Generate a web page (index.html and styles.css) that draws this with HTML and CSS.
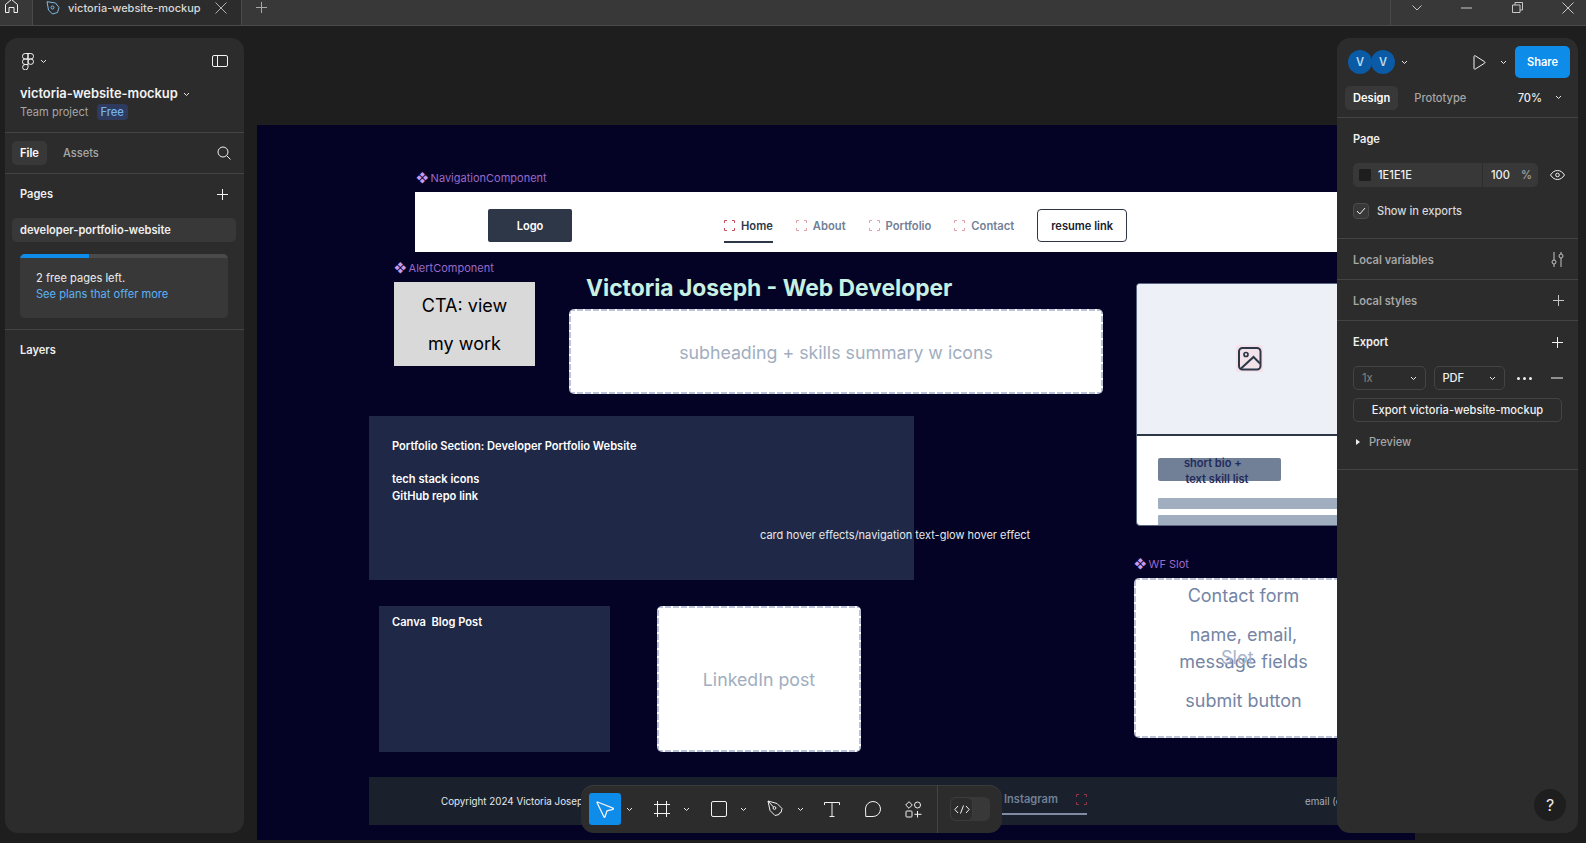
FILE: index.html
```html
<!DOCTYPE html>
<html lang="en">
<head>
<meta charset="utf-8">
<title>victoria-website-mockup</title>
<link rel="stylesheet" href="styles.css">
</head>
<body>
<header class="tabbar">
  <div class="tab-home">
    <svg class="ico" width="13" height="14" viewBox="0 0 13 14"><path d="M.5 13.500V5.500L6.500.5l6 5v8H9V8.500H4v5z"/></svg>
  </div>
  <div class="tab-active">
    <svg class="ico-blue" width="14" height="14" viewBox="0 0 14 14"><path d="M1 .7l8.500 1.300 3.500 4.500-1.500 5-5 1.500-4-4z"/><circle cx="6.500" cy="6.500" r="1.500"/></svg>
    <span class="tab-title">victoria-website-mockup</span>
    <svg class="ico tab-x" width="12" height="12" viewBox="0 0 12 12"><path d="M.5.5l11 11M11.500.5l-11 11"/></svg>
  </div>
  <div class="tab-plus">
    <svg class="ico" width="11" height="11" viewBox="0 0 11 11"><path d="M5.500 0v11M0 5.500h11"/></svg>
  </div>
  <div class="tab-spacer"></div>
  <div class="win-controls">
    <svg class="ico" width="10" height="6" viewBox="0 0 10 6"><path d="M.5.500L5 5l4.500-4.500"/></svg>
    <svg class="ico" width="11" height="2" viewBox="0 0 11 2"><path d="M0 1h11"/></svg>
    <svg class="ico" width="11" height="11" viewBox="0 0 11 11"><path d="M.5 3h7.500v7.500H.5zM3 3V.5h7.500V8H8"/></svg>
    <svg class="ico" width="12" height="12" viewBox="0 0 12 12"><path d="M.5.5l11 11M11.500.5l-11 11"/></svg>
  </div>
</header>

<main class="workspace">
  <div class="board">
    <div class="label label-nav"><span class="diamond">❖</span>NavigationComponent</div>
    <nav class="site-nav">
      <div class="logo">Logo</div>
      <div class="nav-links">
        <a class="nav-tab nav-current"><svg class="ph" width="11" height="11" viewBox="0 0 11 11"><path d="M.5 3V.5H3M8 .5h2.500V3M10.500 8v2.500H8M3 10.500H.5V8"/></svg>Home</a>
        <a class="nav-tab"><svg class="ph" width="11" height="11" viewBox="0 0 11 11"><path d="M.5 3V.5H3M8 .5h2.500V3M10.500 8v2.500H8M3 10.500H.5V8"/></svg>About</a>
        <a class="nav-tab"><svg class="ph" width="11" height="11" viewBox="0 0 11 11"><path d="M.5 3V.5H3M8 .5h2.500V3M10.500 8v2.500H8M3 10.500H.5V8"/></svg>Portfolio</a>
        <a class="nav-tab"><svg class="ph" width="11" height="11" viewBox="0 0 11 11"><path d="M.5 3V.5H3M8 .5h2.500V3M10.500 8v2.500H8M3 10.500H.5V8"/></svg>Contact</a>
        <div class="resume">resume link</div>
      </div>
    </nav>

    <div class="label label-alert"><span class="diamond">❖</span>AlertComponent</div>
    <div class="cta">CTA: view<br>my work</div>
    <h1 class="hero-title">Victoria Joseph - Web Developer</h1>
    <div class="slot slot-sub">subheading + skills summary w icons</div>

    <section class="dark-block portfolio">
      <p>Portfolio Section: Developer Portfolio Website</p>
      <p class="gap-line">tech stack icons</p>
      <p>GitHub repo link</p>
    </section>
    <div class="hover-note">card hover effects/navigation text-glow hover effect</div>

    <section class="dark-block canva"><p>Canva&nbsp; Blog Post</p></section>
    <div class="slot slot-linkedin">LinkedIn post</div>

    <article class="bio-card">
      <div class="bio-media">
        <svg class="bio-icon" width="27" height="27" viewBox="0 0 27 27"><rect x="0" y="0" width="27" height="27" fill="#f6d5dc" opacity=".5"/><rect x="3" y="3" width="21.500" height="21.500" rx="3.500" fill="none" stroke="#2d3748" stroke-width="2"/><circle cx="10" cy="9.500" r="2" fill="none" stroke="#2d3748" stroke-width="1.700"/><path d="M5 23.500L17.500 12l6.500 6.500" fill="none" stroke="#2d3748" stroke-width="2"/></svg>
      </div>
      <div class="bio-body">
        <div class="bio-title"><span class="bio-title-text">short bio +&#160;&#160;&#160;
text skill list</span></div>
        <div class="bio-line"></div>
        <div class="bio-line"></div>
      </div>
    </article>

    <div class="label label-slot"><span class="diamond">❖</span>WF Slot</div>
    <div class="contact">
      <p>Contact form</p>
      <p>name, email,<br>message fields</p>
      <p>submit button</p>
      <span class="contact-slot">Slot</span>
    </div>

    <footer class="site-footer">
      <span class="copy">Copyright 2024 Victoria Joseph</span>
      <span class="insta-tab">Instagram<svg class="ph" width="11" height="11" viewBox="0 0 11 11"><path d="M.5 3V.5H3M8 .5h2.500V3M10.500 8v2.500H8M3 10.500H.5V8"/></svg></span>
      <span class="foot-email">email (contact)</span>
    </footer>
  </div>

  <aside class="panel panel-left">
    <div class="pl-head">
      <div class="pl-iconrow">
        <span class="logo-wrap">
          <svg class="ico" width="12" height="17" viewBox="0 0 12 17"><path d="M6 .5H3.200a2.700 2.700 0 000 5.500H6zM6 .5h2.800a2.700 2.700 0 010 5.500H6zM6 6H3.200a2.700 2.700 0 000 5.500H6zM11.500 8.700a2.700 2.700 0 11-5.500 0 2.700 2.700 0 015.500 0zM6 11.500H3.200A2.700 2.700 0 106 14.200z"/></svg>
          <svg class="chev" width="7" height="5" viewBox="0 0 7 5"><path d="M1 1l2.500 2.500L6 1"/></svg>
        </span>
        <svg class="ico" width="16" height="12" viewBox="0 0 16 12"><rect x=".5" y=".5" width="15" height="11" rx="1.500"/><path d="M5.500 .5v11"/></svg>
      </div>
      <div class="pl-title">victoria-website-mockup <svg class="chev" width="7" height="5" viewBox="0 0 7 5"><path d="M1 1l2.500 2.500L6 1"/></svg></div>
      <div class="pl-sub">Team project <span class="badge">Free</span></div>
    </div>
    <div class="pl-tabs">
      <span class="pill">File</span>
      <span class="pl-assets">Assets</span>
      <svg class="ico pl-search" width="14" height="14" viewBox="0 0 14 14"><circle cx="6" cy="6" r="5"/><path d="M9.700 9.700l3.800 3.800"/></svg>
    </div>
    <div class="pl-pages">
      <div class="row-head"><b>Pages</b><svg class="ico" width="11" height="11" viewBox="0 0 11 11"><path d="M5.500 0v11M0 5.500h11"/></svg></div>
      <div class="page-item">developer-portfolio-website</div>
      <div class="notice">
        <div class="progress"><div class="progress-fill"></div></div>
        <p>2 free pages left.</p>
        <p class="link">See plans that offer more</p>
      </div>
    </div>
    <div class="pl-layers"><b>Layers</b></div>
  </aside>

  <aside class="panel panel-right">
    <div class="pr-top">
      <span class="avatar">V</span><span class="avatar avatar-2">V</span>
      <svg class="chev chev-av" width="7" height="5" viewBox="0 0 7 5"><path d="M1 1l2.500 2.500L6 1"/></svg>
      <svg class="ico pr-play" width="13" height="15" viewBox="0 0 13 15"><path d="M1 1.500c0-.8.6-1 1.200-.7l9.500 6c.5.300.5 1 0 1.300l-9.500 6c-.6.400-1.200 0-1.200-.7z"/></svg>
      <svg class="chev chev-play" width="7" height="5" viewBox="0 0 7 5"><path d="M1 1l2.500 2.500L6 1"/></svg>
      <span class="share">Share</span>
    </div>
    <div class="pr-tabs">
      <span class="pill pill-design">Design</span>
      <span class="pr-proto">Prototype</span>
      <span class="pr-zoom">70%</span>
      <svg class="chev" width="7" height="5" viewBox="0 0 7 5"><path d="M1 1l2.500 2.500L6 1"/></svg>
    </div>
    <section class="pr-page">
      <b class="pr-head">Page</b>
      <div class="pr-fill">
        <div class="fill-box">
          <span class="swatch"></span><span class="fill-hex">1E1E1E</span>
          <span class="fill-op">100</span><span class="fill-pct">%</span>
        </div>
        <svg class="ico" width="15" height="10" viewBox="0 0 15 10"><path d="M.5 5C2.500 2 4.700.5 7.500.5S12.500 2 14.500 5c-2 3-4.200 4.500-7 4.500S2.500 8 .5 5z"/><circle cx="7.500" cy="5" r="1.800"/></svg>
      </div>
      <div class="pr-check">
        <span class="checkbox"><svg class="ico" width="10" height="8" viewBox="0 0 10 8"><path d="M1 4l2.800 3L9 1"/></svg></span>
        <span>Show in exports</span>
      </div>
    </section>
    <section class="pr-row">
      <b class="dim">Local variables</b>
      <svg class="ico ico-dim" width="13" height="15" viewBox="0 0 13 15"><path d="M3 0v8M3 12v3M10 0v2M10 6v9"/><circle cx="3" cy="10" r="2"/><circle cx="10" cy="4" r="2"/></svg>
    </section>
    <section class="pr-row">
      <b class="dim">Local styles</b>
      <svg class="ico ico-dim" width="11" height="11" viewBox="0 0 11 11"><path d="M5.500 0v11M0 5.500h11"/></svg>
    </section>
    <section class="pr-export">
      <div class="row-head"><b>Export</b><svg class="ico" width="11" height="11" viewBox="0 0 11 11"><path d="M5.500 0v11M0 5.500h11"/></svg></div>
      <div class="export-controls">
        <span class="select select-scale">1x<svg class="chev" width="7" height="5" viewBox="0 0 7 5"><path d="M1 1l2.500 2.500L6 1"/></svg></span>
        <span class="select select-fmt">PDF<svg class="chev" width="7" height="5" viewBox="0 0 7 5"><path d="M1 1l2.500 2.500L6 1"/></svg></span>
        <span class="dots"><i></i><i></i><i></i></span>
        <svg class="ico" width="12" height="2" viewBox="0 0 12 2"><path d="M0 1h12"/></svg>
      </div>
      <div class="export-btn">Export victoria-website-mockup</div>
      <div class="preview"><span class="tri"></span>Preview</div>
    </section>
    <span class="help">?</span>
  </aside>

  <div class="toolbar">
    <div class="tools">
      <span class="tool tool-on"><svg class="ico" width="20" height="20" viewBox="0 0 20 20"><path d="M2.500 3L18 9.200c.6.300.5 1-.1 1.100l-5.900 1.500-2 6c-.2.600-.9.600-1.100 0L2 3.600c-.1-.4.200-.7.500-.6z" stroke-width="1.300"/></svg></span>
      <svg class="chev chev-tool" width="7" height="5" viewBox="0 0 7 5"><path d="M1 1l2.500 2.500L6 1"/></svg>
      <span class="tool tool-gap"><svg class="ico" width="16" height="16" viewBox="0 0 16 16"><path d="M3.500 0v16M12.500 0v16M0 3.500h16M0 12.500h16"/></svg></span>
      <svg class="chev chev-tool" width="7" height="5" viewBox="0 0 7 5"><path d="M1 1l2.500 2.500L6 1"/></svg>
      <span class="tool tool-gap"><svg class="ico" width="16" height="16" viewBox="0 0 16 16"><rect x=".5" y=".5" width="15" height="15" rx="1.500"/></svg></span>
      <svg class="chev chev-tool" width="7" height="5" viewBox="0 0 7 5"><path d="M1 1l2.500 2.500L6 1"/></svg>
      <span class="tool tool-gap"><svg class="ico" width="18" height="18" viewBox="0 0 18 18"><path d="M1 1l9 2.500 5 5-1 4-1.500.5-.5 1.500-4 1-5-5z"/><circle cx="7.500" cy="8" r="1.400"/><path d="M1 1l5.500 6"/></svg></span>
      <svg class="chev chev-tool" width="7" height="5" viewBox="0 0 7 5"><path d="M1 1l2.500 2.500L6 1"/></svg>
      <span class="tool tool-text"><svg class="ico" width="16" height="15" viewBox="0 0 16 15"><path d="M.5 3V.5h15V3M8 .5v14M5.500 14.500h5"/></svg></span>
      <span class="tool tool-bubble"><svg class="ico" width="16" height="16" viewBox="0 0 16 16"><path d="M8 .5a7.500 7.500 0 010 15H.8L.5 8A7.500 7.500 0 018 .5z"/></svg></span>
      <span class="tool tool-comp"><svg class="ico" width="17" height="17" viewBox="0 0 17 17"><path d="M4 .7L7.300 4 4 7.300.7 4z"/><circle cx="12.500" cy="4" r="3"/><rect x="1" y="10" width="6" height="6" rx=".8"/><path d="M12.500 10v6.500M9.500 13.300h7"/></svg></span>
    </div>
    <div class="dev-toggle">
      <span class="dev-knob"><svg class="ico" width="16" height="9" viewBox="0 0 16 9"><path d="M4 1L.8 4.500 4 8M12 1l3.200 3.500L12 8M9.500.5l-3 8"/></svg></span>
    </div>
  </div>
</main>
</body>
</html>
```

FILE: styles.css
```css
* { box-sizing: border-box; }
html, body { margin: 0; height: 100%; overflow: hidden; }
body {
  width: 1586px;
  height: 843px;
  display: flex;
  flex-direction: column;
  background: #1e1e1e;
  font-family: Inter, "Liberation Sans", sans-serif;
  font-size: 11.1px;
  color: #f0f0f0;
}
p { margin: 0; }
b { font-weight: 600; }
.ico { fill: none; stroke: #f2f2f2; stroke-width: 1; display: block; flex: none; }
.ico-dim { stroke: #c4c4c4; }
.ico-blue { fill: none; stroke: #7dbbe8; stroke-width: 1; display: block; flex: none; }
.chev { fill: none; stroke: #e8e8e8; stroke-width: 1; display: block; flex: none; }

/* Tab bar */
.tabbar {
  flex: none;
  height: 26px;
  display: flex;
  background: #383838;
  border-bottom: 1px solid #4a4a4a;
}
.tab-home {
  width: 33px;
  padding: 0 0 0 5px;
  overflow: hidden;
  border-right: 1px solid #4a4a4a;
}
.tab-home .ico { margin-top: -1px; }
.tab-active {
  width: 209px;
  display: flex;
  align-items: center;
  padding: 0 14px 10px 13px;
  background: #2c2c2c;
  border-right: 1px solid #4a4a4a;
}
.tab-title { margin-left: 8px; font-size: 11px; font-weight: 500; color: #d8d8d8; flex: 1; }
.tab-x { stroke: #b0b0b0; }
.tab-plus { padding: 2px 0 0 14px; }
.tab-plus .ico { stroke: #a8a8a8; }
.tab-spacer { flex: 1; }
.win-controls {
  width: 196px;
  display: flex;
  align-items: center;
  justify-content: space-between;
  padding: 0 12px 10px 21px;
  border-left: 1px solid #4a4a4a;
}
.win-controls .ico { stroke: #c8c8c8; }

/* Canvas */
.workspace { flex: 1; position: relative; overflow: hidden; }
.board {
  position: absolute;
  left: 257px;
  top: 99px;
  width: 1158px;
  height: 715px;
  background: #040326;
  overflow: hidden;
}
.label {
  position: absolute;
  font-size: 11px;
  line-height: 14px;
  color: #9a6ac8;
  white-space: nowrap;
}
.diamond { margin-right: 2px; color: #c79af0; font-size: 12px; }
.label-nav { left: 159px; top: 46px; }
.label-alert { left: 137px; top: 136px; }
.label-slot { left: 877px; top: 432px; }

.site-nav {
  position: absolute;
  left: 158px;
  top: 67px;
  width: 1000px;
  height: 60px;
  display: flex;
  padding: 17px 0 0 73px;
  background: #fff;
}
.logo {
  width: 84px;
  height: 33px;
  display: flex;
  align-items: center;
  justify-content: center;
  background: #2d3748;
  border-radius: 2px;
  color: #fff;
  font-weight: 600;
}
.nav-links { display: flex; gap: 23px; margin-left: 152px; }
.nav-tab {
  height: 34px;
  padding-top: 1px;
  display: flex;
  align-items: center;
  gap: 6px;
  border-bottom: 2px solid transparent;
  color: #718096;
  font-size: 11.200px;
  font-weight: 600;
}
.nav-current { color: #2d3748; border-bottom-color: #2d3748; }
.ph { fill: none; stroke: #e0a0aa; stroke-width: 1; display: block; flex: none; }
.nav-current .ph { stroke: #c4505f; }
.resume {
  width: 90px;
  height: 33px;
  display: flex;
  align-items: center;
  justify-content: center;
  border: 1.500px solid #2d3748;
  border-radius: 4px;
  color: #1a202c;
  font-weight: 600;
}
.cta {
  position: absolute;
  left: 137px;
  top: 157px;
  width: 141px;
  height: 84px;
  padding-top: 5px;
  background: #d9d9d9;
  color: #000;
  font-size: 18px;
  line-height: 38px;
  text-align: center;
}
.hero-title {
  position: absolute;
  left: 329px;
  top: 146px;
  margin: 0;
  font-size: 22.800px;
  line-height: 34px;
  font-weight: 700;
  color: #c8f0e2;
  white-space: nowrap;
}
.slot {
  position: absolute;
  display: flex;
  align-items: center;
  justify-content: center;
  border-radius: 5px;
  color: #a0aec0;
  font-size: 17.750px;
  background:
    repeating-linear-gradient(90deg, #bcc3d8 0 6px, transparent 6px 8px) top / 100% 2px no-repeat,
    repeating-linear-gradient(90deg, #bcc3d8 0 6px, transparent 6px 8px) bottom / 100% 2px no-repeat,
    repeating-linear-gradient(0deg, #bcc3d8 0 6px, transparent 6px 8px) left / 2px 100% no-repeat,
    repeating-linear-gradient(0deg, #bcc3d8 0 6px, transparent 6px 8px) right / 2px 100% no-repeat,
    #fff;
}
.slot-sub { left: 312px; top: 184px; width: 534px; height: 85px; padding-top: 2px; }
.slot-linkedin { left: 400px; top: 481px; width: 204px; height: 146px; }

.dark-block {
  position: absolute;
  background: #1f2947;
  color: #fff;
  font-weight: 600;
  line-height: 17px;
}
.portfolio { left: 112px; top: 291px; width: 545px; height: 164px; padding: 21.500px 23px; }
.gap-line { margin-top: 16.500px; }
.canva { left: 122px; top: 481px; width: 231px; height: 146px; padding: 8px 13px; }
.hover-note {
  position: absolute;
  left: 503px;
  top: 403px;
  color: #e8e8e8;
  font-size: 11px;
  line-height: 14px;
  white-space: nowrap;
}

.bio-card {
  position: absolute;
  left: 879px;
  top: 158px;
  width: 260px;
  height: 243px;
  display: flex;
  flex-direction: column;
  overflow: hidden;
  background: #fff;
  border: 1px solid #5a6580;
  border-radius: 4px;
}
.bio-media {
  flex: none;
  height: 152px;
  display: flex;
  align-items: center;
  justify-content: center;
  padding: 0 34px 2px 0;
  background: #edf0f7;
  border-bottom: 2px solid #2d3748;
}
.bio-icon { display: block; }
.bio-body { flex: 1; padding: 22px 0 0 21px; }
.bio-title {
  width: 123px;
  height: 23px;
  margin-bottom: 17px;
  background: #718096;
  border-radius: 2px;
  color: #232b5c;
  font-weight: 600;
  line-height: 16px;
  text-align: center;
  white-space: pre;
}
.bio-title-text { display: block; position: relative; top: -3px; left: -2.500px; }
.bio-line {
  height: 11px;
  margin-bottom: 6px;
  background: #a0aec0;
  border-radius: 1px;
}
.contact {
  position: absolute;
  left: 877px;
  top: 453px;
  width: 260px;
  height: 160px;
  padding: 4px 41px 0 0;
  border-radius: 5px;
  color: #7485a5;
  font-size: 18px;
  line-height: 27px;
  text-align: center;
  background:
    repeating-linear-gradient(90deg, #bcc3d8 0 6px, transparent 6px 8px) top / 100% 2px no-repeat,
    repeating-linear-gradient(90deg, #bcc3d8 0 6px, transparent 6px 8px) bottom / 100% 2px no-repeat,
    repeating-linear-gradient(0deg, #bcc3d8 0 6px, transparent 6px 8px) left / 2px 100% no-repeat,
    #fff;
}
.contact p { margin-bottom: 12px; }
.contact-slot {
  position: absolute;
  left: 87px;
  top: 66px;
  color: #a9b4cc;
}
.site-footer {
  position: absolute;
  left: 112px;
  top: 652px;
  width: 1000px;
  height: 48px;
  display: flex;
  align-items: center;
  background: #1a202c;
  font-size: 9.800px;
}
.copy { flex: none; margin-left: 72px; width: 551px; color: #e2e8f0; white-space: nowrap; }
.insta-tab {
  flex: none;
  align-self: flex-start;
  height: 34px;
  width: 95px;
  margin-top: 4px;
  padding: 11px 0 7px 12px;
  display: flex;
  align-items: center;
  justify-content: space-between;
  border-bottom: 2px solid #7f8aa3;
  font-size: 11.100px;
  font-weight: 600;
  color: #718096;
}
.insta-tab .ph { stroke: #8c3a4a; }
.foot-email { flex: none; margin-left: 218px; color: #a0aec0; white-space: nowrap; }

/* Panels */
.panel {
  position: absolute;
  top: 12px;
  bottom: 10px;
  display: flex;
  flex-direction: column;
  background: #2c2c2c;
  border-radius: 13px;
}
.panel-left { left: 5px; width: 239px; }
.panel-right { left: 1337px; width: 241px; }
.pl-head { height: 95px; padding: 14px 16px 0 15px; border-bottom: 1px solid #444; }
.pl-iconrow { display: flex; justify-content: space-between; align-items: center; height: 18px; }
.logo-wrap { display: flex; align-items: center; gap: 6px; margin-left: 2px; }
.pl-title {
  margin-top: 16px;
  font-size: 12.900px;
  line-height: 16px;
  font-weight: 600;
  display: flex;
  align-items: center;
  gap: 5px;
  color: #f2f2f2;
}
.pl-sub { margin-top: 2px; display: flex; align-items: center; gap: 8px; color: #a6a6a6; line-height: 16px; }
.badge { padding: 0 4px; background: #2f3b5e; border-radius: 4px; color: #74b4f2; font-weight: 500; }
.pl-tabs { height: 41px; display: flex; align-items: center; padding: 0 13px 0 7px; border-bottom: 1px solid #444; }
.pill { height: 24px; padding: 0 8px; display: flex; align-items: center; background: #383838; border-radius: 5px; font-weight: 600; color: #fff; }
.pl-assets { margin-left: 16px; color: #a6a6a6; font-weight: 500; }
.pl-search { margin-left: auto; }
.pl-pages { height: 156px; padding: 12px 8px 0 7px; border-bottom: 1px solid #444; }
.row-head { display: flex; justify-content: space-between; align-items: center; height: 16px; }
.pl-pages .row-head { padding: 0 8px; }
.page-item { margin-top: 16px; height: 24px; padding: 0 8px; display: flex; align-items: center; background: #383838; border-radius: 5px; font-weight: 600; }
.notice { margin: 12px 8px 0; height: 64px; background: #383838; border-radius: 5px; overflow: hidden; line-height: 16px; color: #ececec; }
.notice p { padding-left: 16px; }
.notice p:nth-child(2) { margin-top: 12px; }
.progress { height: 4px; background: #4a4a4a; }
.progress-fill { width: 69px; height: 4px; background: #0d8ce9; }
.link { color: #5db2f7; }
.pl-layers { padding: 12px 15px; line-height: 16px; }

.pr-top { height: 48px; padding: 0 8px 0 11px; display: flex; align-items: center; }
.avatar { width: 24px; height: 24px; display: flex; align-items: center; justify-content: center; border-radius: 50%; background: #0a5aa5; color: #bcd8f2; font-weight: 600; }
.avatar-2 { margin-left: -1px; }
.chev-av { margin-left: 6px; }
.pr-play { margin-left: 65px; }
.chev-play { margin-left: 14px; }
.share {
  margin-left: 8px;
  width: 55px;
  height: 32px;
  display: flex;
  align-items: center;
  justify-content: center;
  background: #0d8ce9;
  border-radius: 5px;
  color: #fff;
  font-weight: 600;
}
.pr-tabs { height: 32px; padding: 0 16px 8px 8px; display: flex; align-items: center; border-bottom: 1px solid #444; }
.pill-design { height: 24px; }
.pr-proto { margin-left: 16px; color: #a6a6a6; font-weight: 500; }
.pr-zoom { margin-left: auto; margin-right: 13px; font-weight: 500; }
.pr-page { height: 121px; padding: 13px 16px 0; border-bottom: 1px solid #444; }
.pr-head { display: block; line-height: 16px; }
.pr-fill { margin: 16px -3px 0 0; display: flex; align-items: center; justify-content: space-between; }
.fill-box { width: 185px; height: 24px; display: flex; align-items: center; background: #383838; border-radius: 5px; padding-left: 6px; }
.swatch { width: 12px; height: 12px; background: #1e1e1e; border-radius: 1px; }
.fill-hex { margin-left: 7px; width: 105px; font-weight: 500; border-right: 1px solid #2c2c2c; line-height: 24px; }
.fill-op { margin-left: 8px; font-weight: 500; }
.fill-pct { margin-left: 11px; color: #a6a6a6; font-weight: 500; }
.pr-check { margin-top: 16px; display: flex; align-items: center; gap: 8px; font-weight: 500; color: #d8d8d8; }
.checkbox { width: 16px; height: 16px; display: flex; align-items: center; justify-content: center; border: 1px solid #4c4c4c; border-radius: 4px; background: #383838; }
.pr-row { height: 41px; padding: 1px 14px 0 16px; display: flex; align-items: center; justify-content: space-between; border-bottom: 1px solid #444; }
.dim { color: #a6a6a6; }
.pr-export { height: 149px; padding: 13px 15px 0 16px; border-bottom: 1px solid #444; }
.export-controls { margin-top: 16px; display: flex; align-items: center; }
.select { height: 24px; padding: 0 8px; display: flex; align-items: center; justify-content: space-between; border: 1px solid #444; border-radius: 5px; font-weight: 500; }
.select-scale { width: 73px; color: #777; }
.select-fmt { width: 72px; margin-left: 8px; }
.dots { display: flex; gap: 3px; margin: 0 19px 0 12px; }
.dots i { width: 3px; height: 3px; border-radius: 50%; background: #eee; }
.export-btn { margin-top: 8px; width: 209px; height: 24px; display: flex; align-items: center; justify-content: center; border: 1px solid #444; border-radius: 5px; font-weight: 500; }
.preview { margin-top: 12px; display: flex; align-items: center; color: #a6a6a6; font-weight: 500; line-height: 16px; }
.tri { width: 0; height: 0; margin: 0 9px 0 3px; border-left: 4px solid #eee; border-top: 3px solid transparent; border-bottom: 3px solid transparent; }
.help {
  position: absolute;
  right: 12px;
  bottom: 12px;
  width: 32px;
  height: 32px;
  display: flex;
  align-items: center;
  justify-content: center;
  border-radius: 50%;
  background: #1e1e1e;
  font-size: 16px;
  color: #eee;
}

/* Toolbar */
.toolbar {
  position: absolute;
  left: 581px;
  top: 759px;
  width: 421px;
  height: 48px;
  display: flex;
  background: #2c2c2c;
  border-radius: 13px;
  box-shadow: inset 0 1px 0 #3a3a3a;
}
.tools {
  width: 357px;
  display: flex;
  align-items: center;
  padding-left: 8px;
  border-right: 1px solid #444;
}
.tool { display: flex; align-items: center; justify-content: center; width: 32px; height: 32px; border-radius: 3px; }
.tool-on { background: #0d8ce9; }
.chev-tool { margin-left: 4.500px; }
.tool-gap { margin-left: 13.500px; }
.tool-text { margin-left: 12.500px; }
.tool-bubble { margin-left: 9px; }
.tool-comp { margin-left: 8px; }
.dev-toggle { margin: 12px 0 0 12px; width: 40px; height: 24px; background: #383838; border-radius: 6px; }
.dev-knob { width: 23px; height: 24px; display: flex; align-items: center; justify-content: center; background: #2c2c2c; border: 1px solid #3c3c3c; border-radius: 6px; }
```
